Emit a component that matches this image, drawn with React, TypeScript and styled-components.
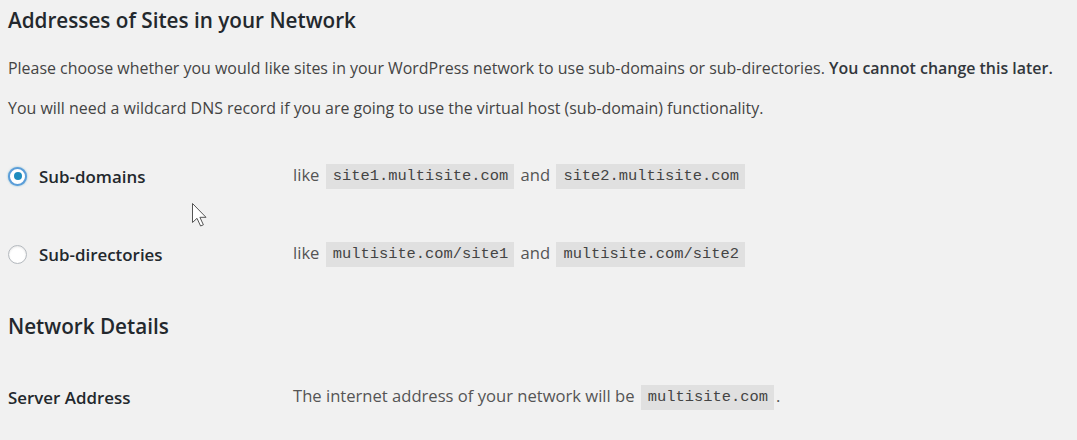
import React from "react";
import styled, { createGlobalStyle } from "styled-components";

const GlobalStyle = createGlobalStyle`
  html, body { margin: 0; padding: 0; }
  body {
    background: #f1f1f1;
    font-family: "Open Sans", "Noto Sans", Arial, sans-serif;
    color: #444;
    -webkit-font-smoothing: antialiased;
  }
`;

const Page = styled.div`
  position: relative;
  width: 1077px;
  height: 440px;
  box-sizing: border-box;
  padding: 6px 8px 0;
  overflow: hidden;
`;

const Title = styled.h2<{ $mt?: number }>`
  margin: ${(p) => p.$mt ?? 0}px 0 0;
  font-size: 20.7px;
  line-height: 28px;
  font-weight: 600;
  color: #23282d;
`;

const Para = styled.p<{ $mt: number }>`
  margin: ${(p) => p.$mt}px 0 0;
  font-size: 15.95px;
  line-height: 24px;
  color: #444;
  white-space: nowrap;
  strong { font-weight: 600; color: #32373c; }
`;

const Table = styled.div<{ $mt: number }>`
  margin-top: ${(p) => p.$mt}px;
  display: flex;
  flex-direction: column;
`;

const Row = styled.div`
  display: grid;
  grid-template-columns: 285px 1fr;
  align-items: center;
  height: 78px;
`;

const Label = styled.label`
  display: flex;
  align-items: center;
  gap: 12px;
  font-size: 16.9px;
  font-weight: 600;
  color: #23282d;
`;

const Radio = styled.span<{ $checked?: boolean }>`
  width: 19px;
  height: 19px;
  box-sizing: border-box;
  border-radius: 50%;
  background: #fff;
  border: ${(p) => (p.$checked ? "2px solid #5b9dd9" : "1px solid #b4b9be")};
  box-shadow: ${(p) =>
    p.$checked ? "0 0 2px rgba(30,140,190,.6)" : "inset 0 1px 2px rgba(0,0,0,.1)"};
  display: flex;
  align-items: center;
  justify-content: center;
  &::after {
    content: "";
    display: ${(p) => (p.$checked ? "block" : "none")};
    width: 8px;
    height: 8px;
    border-radius: 50%;
    background: #1e8cbe;
  }
`;

const Value = styled.div`
  font-size: 16.6px;
  line-height: 25px;
  color: #555;
  white-space: nowrap;
`;

const Code = styled.code`
  display: inline-block;
  vertical-align: middle;
  font-family: "Liberation Mono", "DejaVu Sans Mono", monospace;
  font-size: 15.4px;
  color: #444;
  background: rgba(0, 0, 0, 0.07);
  height: 25px;
  line-height: 25px;
  margin: 0 2px;
  padding: 0 6px 0 7px;
  position: relative;
  top: -1px;
`;

const Cursor = styled.svg`
  position: absolute;
  left: 192px;
  top: 203px;
`;

export default function App() {
  return (
    <>
      <GlobalStyle />
      <Page>
        <Title>Addresses of Sites in your Network</Title>
        <Para $mt={22}>
          Please choose whether you would like sites in your WordPress network to use
          sub-domains or sub-directories. <strong>You cannot change this later.</strong>
        </Para>
        <Para $mt={16}>
          You will need a wildcard DNS record if you are going to use the virtual host
          (sub-domain) functionality.
        </Para>
        <Table $mt={17}>
          <Row>
            <Label>
              <Radio $checked />
              Sub-domains
            </Label>
            <Value>
              like <Code>site1.multisite.com</Code> and <Code>site2.multisite.com</Code>
            </Value>
          </Row>
          <Row>
            <Label>
              <Radio />
              Sub-directories
            </Label>
            <Value>
              like <Code>multisite.com/site1</Code> and <Code>multisite.com/site2</Code>
            </Value>
          </Row>
        </Table>
        <Title $mt={19}>Network Details</Title>
        <Table $mt={18}>
          <Row>
            <Label>Server Address</Label>
            <Value>
              The internet address of your network will be <Code>multisite.com</Code>.
            </Value>
          </Row>
        </Table>
        <Cursor width="16" height="24" viewBox="0 0 16 24">
          <path
            d="M0.5 0.5 L0.5 19.5 L5 15.3 L8.6 23 L11.4 21.8 L7.9 14.3 L14 14.3 Z"
            fill="#fff"
            stroke="#555"
            strokeWidth="1"
            strokeLinejoin="round"
          />
        </Cursor>
      </Page>
    </>
  );
}
